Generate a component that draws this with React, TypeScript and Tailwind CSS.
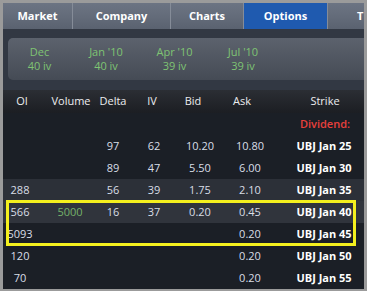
import React from 'react';

const font = { fontFamily: '"Open Sans", "DejaVu Sans", sans-serif' };

type Row = {
  oi?: string;
  vol?: string;
  delta?: string;
  iv?: string;
  bid?: string;
  ask?: string;
  strike: string;
  bg?: string;
};

const rows: Row[] = [
  { delta: '97', iv: '62', bid: '10.20', ask: '10.80', strike: 'UBJ Jan 25' },
  { delta: '89', iv: '47', bid: '5.50', ask: '6.00', strike: 'UBJ Jan 30' },
  { oi: '288', delta: '56', iv: '39', bid: '1.75', ask: '2.10', strike: 'UBJ Jan 35', bg: 'bg-[#2c3038]' },
  { oi: '566', vol: '5000', delta: '16', iv: '37', bid: '0.20', ask: '0.45', strike: 'UBJ Jan 40', bg: 'bg-[#30343c]' },
  { oi: '5093', ask: '0.20', strike: 'UBJ Jan 45' },
  { oi: '120', ask: '0.20', strike: 'UBJ Jan 50' },
  { oi: '70', ask: '0.20', strike: 'UBJ Jan 55' },
];

const expiries = [
  { m: 'Dec', iv: '40 iv', w: 'w-[63px]' },
  { m: "Jan '10", iv: '40 iv', w: 'w-[70px]' },
  { m: "Apr '10", iv: '39 iv', w: 'w-[67px]' },
  { m: "Jul '10", iv: '39 iv', w: 'w-[70px]' },
];

function Cell({ w, children, className = '' }: { w: string; children?: React.ReactNode; className?: string }) {
  return <div className={`${w} flex justify-center whitespace-nowrap shrink-0 ${className}`}>{children}</div>;
}

export default function App() {
  return (
    <div className="w-[367px] h-[291px] bg-[#9b9b9b] pt-[3px] px-[3px] pb-[2px]" style={font}>
      <div className="relative h-full bg-[#1b1f26] overflow-hidden flex flex-col text-[11px]">
        {/* Tabs */}
        <div className="h-[26px] flex shrink-0 bg-gradient-to-b from-[#6c7483] via-[#646c7a] to-[#5a6270] text-white font-bold">
          <div className="w-[70px] shrink-0 flex items-center justify-center border-r border-[#858c98]">Market</div>
          <div className="w-[98px] shrink-0 flex items-center justify-center border-r border-[#858c98]">Company</div>
          <div className="w-[73px] shrink-0 flex items-center justify-center border-r border-[#858c98]">Charts</div>
          <div className="w-[84px] shrink-0 flex items-center justify-center bg-[#1f5aaf] border-r border-[#858c98]">Options</div>
          {/* next tab, only its first letter shows */}
          <div className="flex-1 min-w-0 flex items-center pl-[29px]">T</div>
        </div>

        {/* Expiry strip */}
        <div className="bg-[#323843] pt-[9px] pb-[10px] pl-[5px] shrink-0">
          <div className="h-[42px] w-[400px] rounded-[5px] bg-gradient-to-b from-[#5c626d] to-[#454b55] flex text-[#7fc473] leading-[14px]">
            {expiries.map((e) => (
              <div key={e.m} className={`${e.w} flex flex-col items-center justify-center`}>
                <span>{e.m}</span>
                <span>{e.iv}</span>
              </div>
            ))}
          </div>
        </div>

        {/* Header */}
        <div className="h-[23px] shrink-0 flex items-center bg-gradient-to-b from-[#2b2e34] to-[#1c1e23] text-[#ecedef]">
          <Cell w="w-[38px]">OI</Cell>
          <Cell w="w-[60px]">Volume</Cell>
          <Cell w="w-[24px]">Delta</Cell>
          <Cell w="w-[54px]">IV</Cell>
          <Cell w="w-[28px]">Bid</Cell>
          <Cell w="w-[70px]">Ask</Cell>
          <Cell w="w-[87px]" className="pl-[9px]">Strike</Cell>
        </div>

        {/* Dividend row */}
        <div className="h-[22px] shrink-0 flex items-center">
          <div className="w-[274px] shrink-0" />
          <Cell w="w-[87px]" className="pl-[9px] text-[#e8403c] font-semibold">Dividend:</Cell>
        </div>

        {rows.map((r) => (
          <div key={r.strike} className={`h-[22px] shrink-0 flex items-center text-[#d9dee6] ${r.bg ?? ''}`}>
            <Cell w="w-[34px]">{r.oi}</Cell>
            <Cell w="w-[66px]" className="text-[#74b26a]">{r.vol}</Cell>
            <Cell w="w-[20px]">{r.delta}</Cell>
            <Cell w="w-[62px]">{r.iv}</Cell>
            <Cell w="w-[30px]">{r.bid}</Cell>
            <Cell w="w-[70px]">{r.ask}</Cell>
            <Cell w="w-[78px]" className="text-white font-bold">{r.strike}</Cell>
          </div>
        ))}

        {/* Highlight box */}
        <div className="absolute left-[3px] top-[197px] w-[350px] h-[46px] border-[3px] border-[#f4f01e]" />
      </div>
    </div>
  );
}
